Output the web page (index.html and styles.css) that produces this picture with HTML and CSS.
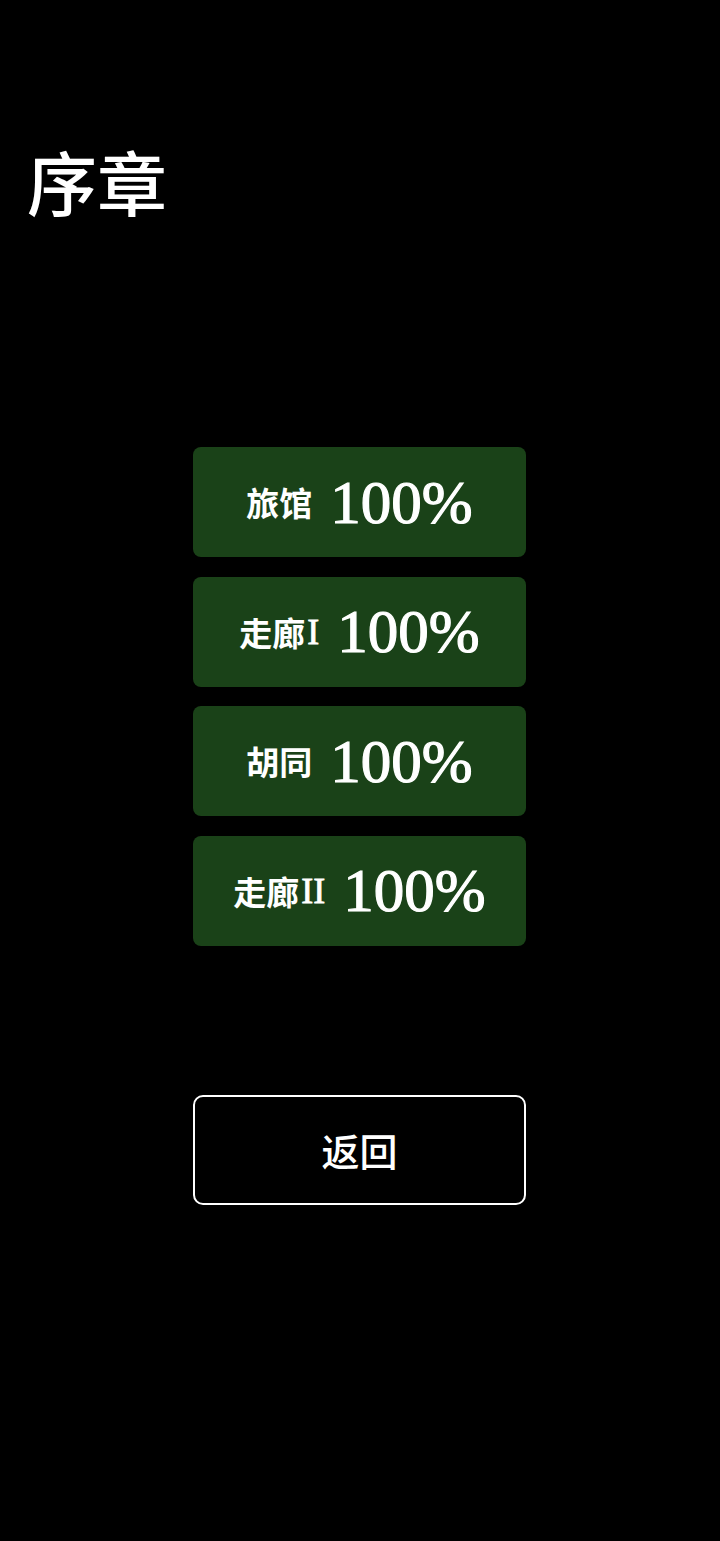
FILE: index.html
```html
<!DOCTYPE html>
<html lang="zh">
<head>
<meta charset="utf-8">
<link rel="stylesheet" href="styles.css">
</head>
<body>
<div class="page">
  <h1 class="title">序章</h1>
  <div class="levels">
    <div class="level"><span class="name">旅馆</span><span class="pct">100%</span></div>
    <div class="level"><span class="name">走廊<span class="roman">I</span></span><span class="pct">100%</span></div>
    <div class="level"><span class="name">胡同</span><span class="pct">100%</span></div>
    <div class="level"><span class="name">走廊<span class="roman">II</span></span><span class="pct">100%</span></div>
  </div>
  <div class="back">返回</div>
</div>
</body>
</html>
```
FILE: styles.css
```css
html, body {
  margin: 0;
  padding: 0;
  background: #000;
  color: #fff;
}
.page {
  width: 720px;
  height: 1541px;
  display: flex;
  flex-direction: column;
  font-family: "Noto Sans CJK SC", "Liberation Serif", serif;
}
.title {
  margin: 141px 0 0 27px;
  font-size: 70px;
  line-height: 80px;
  font-weight: 500;
  font-family: "Noto Sans CJK SC", sans-serif;
}
.levels {
  margin: 226px 0 0 193px;
  width: 333px;
  display: flex;
  flex-direction: column;
  gap: 19.5px;
}
.level {
  height: 110px;
  background: #1a4218;
  border-radius: 8px;
  display: flex;
  align-items: center;
  justify-content: center;
  gap: 18px;
}
.name {
  font-family: "Noto Sans CJK SC", sans-serif;
  font-size: 33px;
  font-weight: 700;
  display: flex;
  align-items: center;
}
.roman {
  font-family: "Liberation Serif", serif;
  font-size: 36px;
  font-weight: 400;
  -webkit-text-stroke: 0.8px #fff;
  margin-left: 2px;
}
.pct {
  font-family: "Liberation Serif", serif;
  font-size: 61px;
  line-height: 1;
  -webkit-text-stroke: 1.2px #fff;
}
.back {
  margin: 149px 0 0 193px;
  width: 329px;
  height: 106px;
  border: 2px solid #fff;
  border-radius: 10px;
  display: flex;
  align-items: center;
  justify-content: center;
  font-family: "Noto Sans CJK SC", sans-serif;
  font-size: 38px;
  font-weight: 500;
}
```
